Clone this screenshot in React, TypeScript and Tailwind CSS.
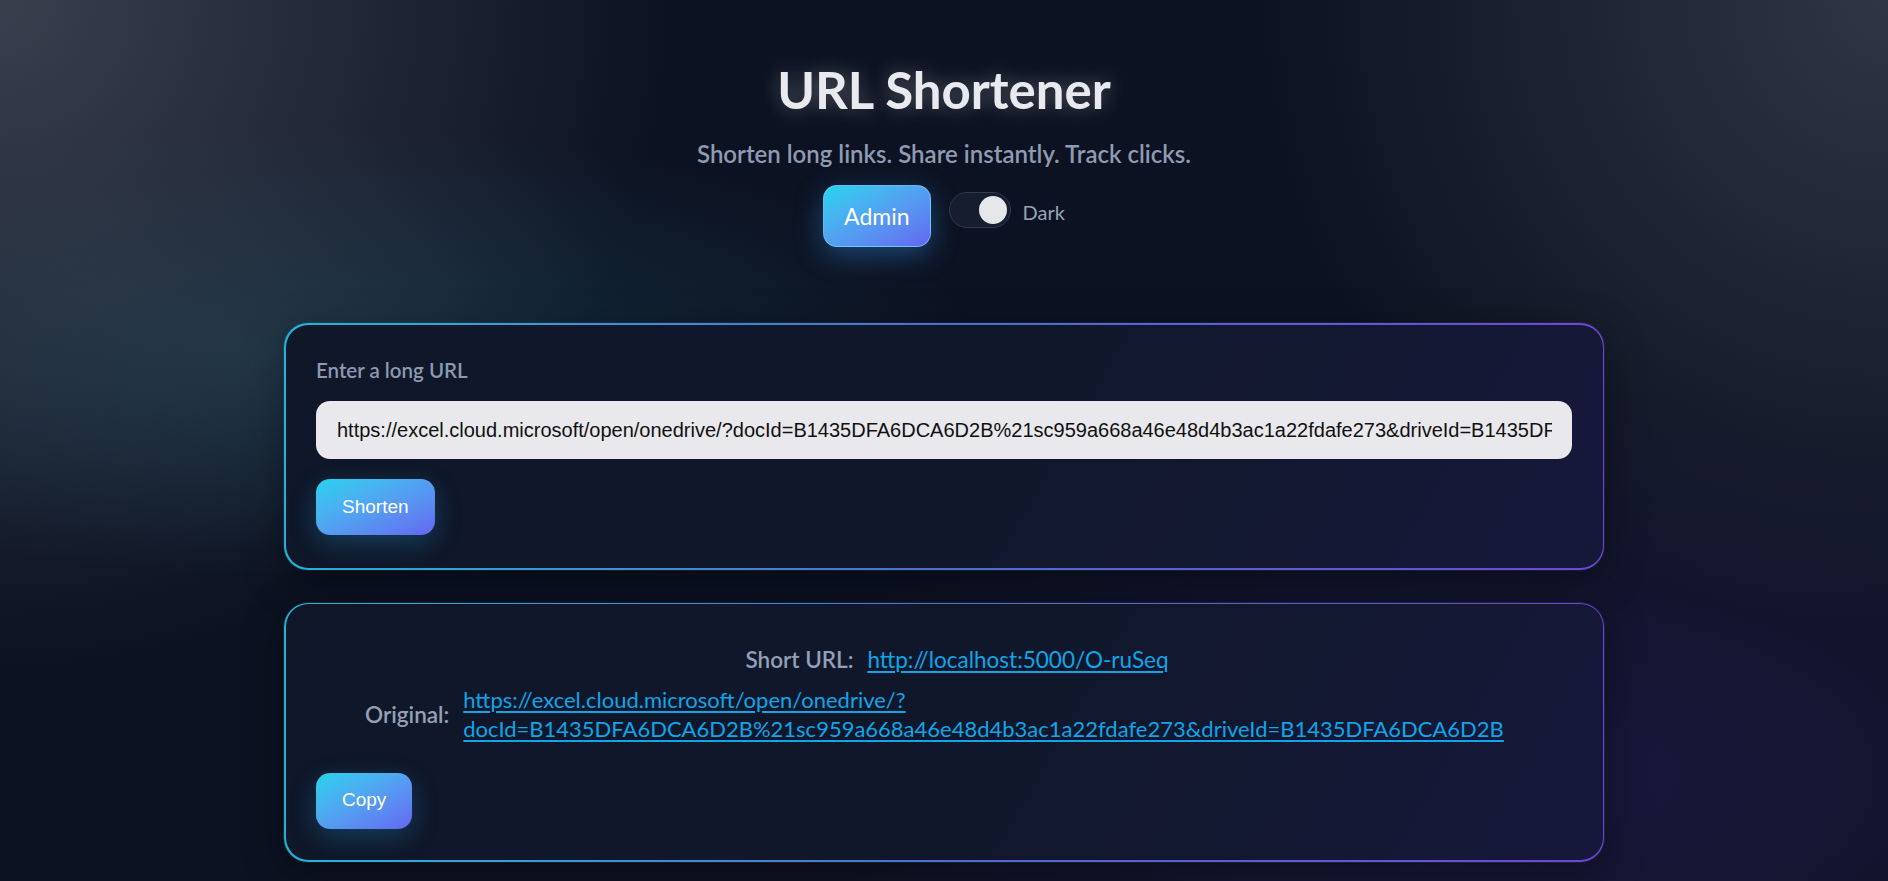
import React, { useState } from 'react';

const LONG_URL =
  'https://excel.cloud.microsoft/open/onedrive/?docId=B1435DFA6DCA6D2B%21sc959a668a46e48d4b3ac1a22fdafe273&driveId=B1435DFA6DCA6D2B';
const SHORT_URL = 'http://localhost:5000/O-ruSeq';

function Card({ children, className }: { children: React.ReactNode; className?: string }) {
  return (
    <div className="w-[1320px] rounded-[24px] p-[1.5px] bg-gradient-to-r from-[#1fb3d9] via-[#4a6fd0] to-[#6b46dc] shadow-[0_0_0_1px_rgba(255,255,255,0.06),0_10px_40px_rgba(0,0,0,0.35)]">
      <div
        className={
          'rounded-[22.5px] bg-[linear-gradient(120deg,#0f1729_0%,#10172b_55%,#16183a_100%)] ' +
          (className ?? '')
        }
      >
        {children}
      </div>
    </div>
  );
}

function GradientButton({ label }: { label: string }) {
  return (
    <button className="h-[56px] px-[26px] rounded-[14px] bg-gradient-to-br from-[#22d3ee] to-[#6366f1] text-white text-[19px] font-['Liberation_Sans',Arial,sans-serif] shadow-[0_8px_26px_rgba(34,160,220,0.28)]">
      {label}
    </button>
  );
}

export default function App() {
  const [url, setUrl] = useState(LONG_URL);
  const [dark, setDark] = useState(true);

  return (
    <div className="min-h-screen w-full font-['Lato','Noto_Sans',sans-serif] bg-[#0c1221] bg-[radial-gradient(circle_at_0%_0%,rgba(72,78,92,0.75),rgba(72,78,92,0)_32%),radial-gradient(circle_at_100%_0%,rgba(62,68,82,0.7),rgba(62,68,82,0)_30%),radial-gradient(ellipse_at_16%_40%,rgba(28,72,92,0.55),rgba(28,72,92,0)_30%),radial-gradient(ellipse_at_82%_88%,rgba(48,32,110,0.35),rgba(48,32,110,0)_35%)]">
      <div className="flex flex-col items-center pt-[60px] pb-[18px]">
        <h1 className="text-[51px] leading-[60px] font-bold text-[#e8eaef] [text-shadow:0_0_20px_rgba(255,255,255,0.32)]">
          URL Shortener
        </h1>
        <p className="mt-[17px] text-[24px] leading-[34px] font-semibold text-[#8f9bb3]">
          Shorten long links. Share instantly. Track clicks.
        </p>

        <div className="mt-[2px] flex items-center">
          <button className="mt-[12px] h-[62px] px-[20px] rounded-[14px] border border-[#7dd3fc]/60 bg-gradient-to-br from-[#22d3ee] to-[#6366f1] text-white text-[23px] shadow-[0_8px_28px_rgba(56,150,248,0.4)]">
            Admin
          </button>
          <button
            onClick={() => setDark(!dark)}
            className="ml-[18px] w-[62px] h-[36px] rounded-full border border-[#2f3a4d] bg-[#151d2e] flex items-center justify-end pr-[3px]"
          >
            <span className="w-[28px] h-[28px] rounded-full bg-[#e5e7eb]" />
          </button>
          <span className="ml-[12px] mt-[4px] text-[20px] text-[#94a3b8]">Dark</span>
        </div>

        <div className="mt-[76px]">
          <Card className="px-[30.5px] pt-[30px] pb-[33px]">
            <label className="block text-[20.5px] leading-[30px] font-semibold text-[#8c99b0]">
              Enter a long URL
            </label>
            <input
              value={url}
              onChange={e => setUrl(e.target.value)}
              className="mt-[16.5px] block w-full h-[58px] rounded-[14px] bg-[#e9e8ec] pl-[21px] pr-[20px] text-[20px] text-[#111] font-['Liberation_Sans',Arial,sans-serif] outline-none"
            />
            <div className="mt-[20px]">
              <GradientButton label="Shorten" />
            </div>
          </Card>
        </div>

        <div className="mt-[33px]">
          <Card className="px-[30.5px] pt-[41px] pb-[31.5px]">
            <div className="flex justify-center items-center gap-[14px] pl-[26px] text-[22.5px] leading-[29px]">
              <span className="font-semibold text-[#94a0b6]">Short URL:</span>
              <a href="#" className="text-[#0ea5e9] underline underline-offset-[3px]">
                {SHORT_URL}
              </a>
            </div>
            <div className="mt-[11px] mx-auto max-w-[1158px] flex justify-center items-center gap-[14px] text-[22px] leading-[29px]">
              <span className="shrink-0 text-[22.5px] font-semibold text-[#94a0b6]">Original:</span>
              <a href="#" className="text-[#0ea5e9] underline underline-offset-[3px]">
                {LONG_URL}
              </a>
            </div>
            <div className="mt-[29.5px]">
              <GradientButton label="Copy" />
            </div>
          </Card>
        </div>
      </div>
    </div>
  );
}
